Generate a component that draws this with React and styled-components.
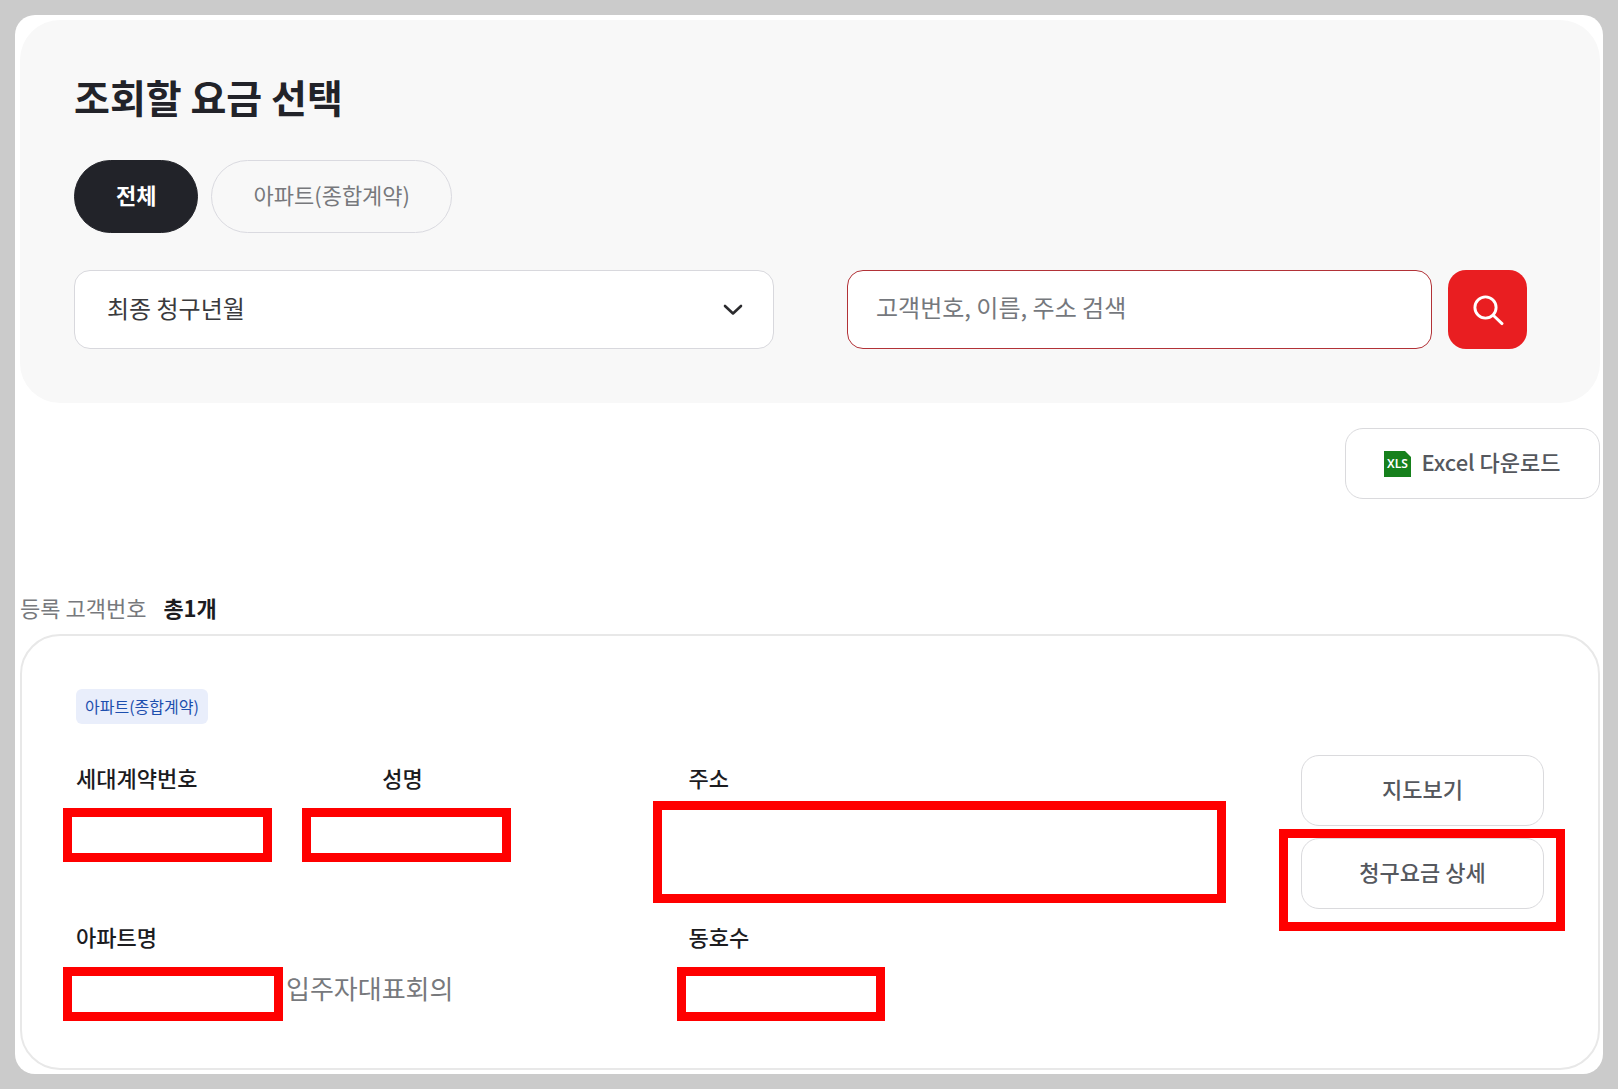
import React from "react";
import styled, { createGlobalStyle } from "styled-components";

const GlobalStyle = createGlobalStyle`
  *, *::before, *::after { box-sizing: border-box; }
  body {
    margin: 0;
    background: #cbcbcb;
    color: #222329;
    font-family: "Noto Sans CJK KR", "Noto Sans", sans-serif;
    font-size: 22px;
    line-height: 32px;
  }
  button, input, select { font: inherit; }
`;

const Page = styled.main`
  margin: 15px;
  padding: 5px 3px 4px 5px;
  background: #fff;
  border-radius: 20px;
`;

const FilterPanel = styled.section`
  padding: 48px 73px 54px 54px;
  background: #f8f8f8;
  border-radius: 40px;
`;

const Title = styled.h1`
  margin: 0 0 36px;
  font-size: 39px;
  line-height: 56px;
  font-weight: 700;
`;

const Pills = styled.div`
  display: flex;
  flex-wrap: wrap;
  gap: 13px;
  margin-bottom: 37px;
`;

const Pill = styled.button`
  height: 73px;
  padding: 0 41px 5px;
  border: 1px solid ${(p) => (p.$active ? "#222329" : "#dadae0")};
  border-radius: 37px;
  background: ${(p) => (p.$active ? "#222329" : "transparent")};
  color: ${(p) => (p.$active ? "#fff" : "#77787c")};
  font-weight: ${(p) => (p.$active ? 700 : 400)};
  cursor: pointer;
`;

const FilterRow = styled.div`
  display: grid;
  grid-template-columns: minmax(0, 35fr) minmax(0, 34fr);
  gap: 73px;
`;

const SelectWrap = styled.div`
  position: relative;
`;

const MonthSelect = styled.select`
  width: 100%;
  height: 79px;
  padding: 0 64px 3px 32px;
  appearance: none;
  border: 1px solid #d8d8dd;
  border-radius: 16px;
  background: #fff;
  color: #3a3a3d;
  font-size: 24px;
  font-weight: 400;
`;

const Chevron = styled.svg`
  position: absolute;
  top: 28px;
  right: 29px;
  width: 24px;
  height: 24px;
  pointer-events: none;
`;

const SearchForm = styled.form`
  display: flex;
  gap: 16px;
`;

const SearchInput = styled.input`
  flex: 1;
  min-width: 0;
  height: 79px;
  padding: 0 28px 6px;
  border: 1px solid #b23237;
  border-radius: 16px;
  background: #fff;
  font-size: 24px;
  font-weight: 400;
  outline: none;
  &::placeholder { color: #75787d; opacity: 1; }
`;

const SearchButton = styled.button`
  display: grid;
  place-items: center;
  width: 79px;
  height: 79px;
  padding: 0;
  border: 0;
  border-radius: 18px;
  background: #e91e21;
  cursor: pointer;
`;

const Toolbar = styled.div`
  display: flex;
  justify-content: flex-end;
  padding: 25px 0 92px;
`;

const OutlineButton = styled.button`
  display: flex;
  align-items: center;
  justify-content: center;
  gap: 10px;
  width: ${(p) => p.$width || "100%"};
  height: 71px;
  padding: 0;
  border: 1px solid #dadadd;
  border-radius: 18px;
  background: #fff;
  color: #55585e;
  font-weight: 500;
  cursor: pointer;
  span { padding-bottom: 6px; }
`;

const Summary = styled.p`
  display: flex;
  gap: 17px;
  margin: 0 0 11px;
  color: #77797d;
  font-weight: 400;
  strong { color: #1c1c1f; font-weight: 700; }
`;

const Card = styled.article`
  padding: 53px 54px 47px;
  border: 2px solid #e8e8e8;
  border-radius: 40px;
`;

const Tag = styled.span`
  display: inline-block;
  padding: 5px 9px 6px;
  border-radius: 6px;
  background: #e9eefb;
  color: #1d4fae;
  font-size: 16px;
  line-height: 24px;
  vertical-align: top;
`;

const CardBody = styled.div`
  display: flex;
  align-items: flex-start;
  padding-top: 31px;
`;

const Fields = styled.dl`
  flex: 1;
  display: grid;
  grid-template-columns: repeat(4, minmax(0, 1fr));
  row-gap: 58px;
  margin: 0;
  padding-top: 6px;
`;

const Field = styled.div`
  grid-column: span ${(p) => p.$span || 1};
  dt {
    color: #1c1c1f;
    font-weight: 500;
  }
  dd {
    display: flex;
    height: 54px;
    margin: 15px 0 0;
    color: #77797d;
    font-size: 26px;
    line-height: 42px;
    white-space: nowrap;
  }
`;

const Mask = styled.span`
  flex: none;
  width: ${(p) => p.$width}px;
  height: ${(p) => p.$height || 54}px;
  margin: ${(p) => -(p.$up || 0)}px 3px 0 -${(p) => p.$back}px;
  border: 9px solid #f00;
  background: #fff;
`;

const Actions = styled.div`
  flex: none;
  width: 243px;
  display: grid;
  gap: 12px;
`;

const Highlighted = styled.div`
  position: relative;
  &::after {
    content: "";
    position: absolute;
    inset: -9px -21px -22px -22px;
    border: 9px solid #f00;
    pointer-events: none;
  }
`;

const XlsText = styled.text`
  font: 600 12px "Noto Sans", sans-serif;
  fill: #fff;
`;

const SearchIcon = () => (
  <svg width="32" height="32" viewBox="0 0 32 32" fill="none" stroke="#fff" strokeWidth="2.9" strokeLinecap="round" aria-hidden="true">
    <circle cx="13.5" cy="13.5" r="10.6" />
    <path d="M21.2 21.2 30 29.6" />
  </svg>
);

const XlsIcon = () => (
  <svg width="27" height="26" viewBox="0 0 27 26" aria-hidden="true">
    <path d="M0 0h21l6 6v20H0z" fill="#16801c" />
    <XlsText x="13.5" y="17" textAnchor="middle">XLS</XlsText>
  </svg>
);

export default function App() {
  return (
    <>
      <GlobalStyle />
      <Page>
        <FilterPanel>
          <Title>조회할 요금 선택</Title>
          <Pills>
            <Pill type="button" $active aria-pressed="true">전체</Pill>
            <Pill type="button" aria-pressed="false">아파트(종합계약)</Pill>
          </Pills>
          <FilterRow>
            <SelectWrap>
              <MonthSelect aria-label="청구년월">
                <option>최종 청구년월</option>
              </MonthSelect>
              <Chevron viewBox="0 0 24 24" fill="none" stroke="#2b2b2e" strokeWidth="2.6" strokeLinecap="round" strokeLinejoin="round" aria-hidden="true">
                <path d="m4 8 8 7.5L20 8" />
              </Chevron>
            </SelectWrap>
            <SearchForm onSubmit={(e) => e.preventDefault()}>
              <SearchInput type="text" aria-label="고객번호, 이름, 주소 검색" placeholder="고객번호, 이름, 주소 검색" />
              <SearchButton type="submit" aria-label="검색">
                <SearchIcon />
              </SearchButton>
            </SearchForm>
          </FilterRow>
        </FilterPanel>

        <Toolbar>
          <OutlineButton type="button" $width="255px">
            <XlsIcon />
            <span>Excel 다운로드</span>
          </OutlineButton>
        </Toolbar>

        <Summary>
          등록 고객번호 <strong>총1개</strong>
        </Summary>

        <Card>
          <Tag>아파트(종합계약)</Tag>
          <CardBody>
            <Fields>
              <Field>
                <dt>세대계약번호</dt>
                <dd><Mask $width={209} $back={13} /></dd>
              </Field>
              <Field>
                <dt>성명</dt>
                <dd><Mask $width={209} $back={80} /></dd>
              </Field>
              <Field $span={2}>
                <dt>주소</dt>
                <dd><Mask $width={573} $height={102} $back={36} $up={7} /></dd>
              </Field>
              <Field $span={2}>
                <dt>아파트명</dt>
                <dd><Mask $width={220} $back={13} />입주자대표회의</dd>
              </Field>
              <Field $span={2}>
                <dt>동호수</dt>
                <dd><Mask $width={208} $back={12} /></dd>
              </Field>
            </Fields>
            <Actions>
              <OutlineButton type="button"><span>지도보기</span></OutlineButton>
              <Highlighted>
                <OutlineButton type="button"><span>청구요금 상세</span></OutlineButton>
              </Highlighted>
            </Actions>
          </CardBody>
        </Card>
      </Page>
    </>
  );
}
